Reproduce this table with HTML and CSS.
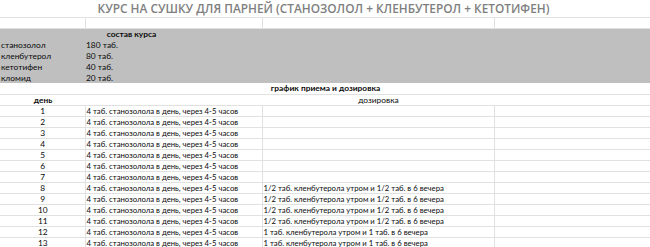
FILE: index.html
```html
<!DOCTYPE html>
<html lang="ru">
<head>
<meta charset="utf-8">
<link rel="stylesheet" href="styles.css">
</head>
<body>
<table class="sheet">
  <colgroup>
    <col class="c-a"><col class="c-b"><col class="c-c"><col class="c-d">
  </colgroup>
  <tr class="r-title"><td colspan="4" class="title">КУРС НА СУШКУ ДЛЯ ПАРНЕЙ (СТАНОЗОЛОЛ + КЛЕНБУТЕРОЛ + КЕТОТИФЕН)</td></tr>
  <tr class="r-empty"><td></td><td></td><td></td><td></td></tr>
  <tr class="r-gray"><td colspan="2" class="bold center">состав курса</td><td></td><td></td></tr>
  <tr class="r-gray"><td>станозолол</td><td>180 таб.</td><td></td><td></td></tr>
  <tr class="r-gray"><td>кленбутерол</td><td>80 таб.</td><td></td><td></td></tr>
  <tr class="r-gray"><td>кетотифен</td><td>40 таб.</td><td></td><td></td></tr>
  <tr class="r-gray"><td>кломид</td><td>20 таб.</td><td></td><td></td></tr>
  <tr class="r-section"><td colspan="4" class="bold center">график приема и дозировка</td></tr>
  <tr class="r-head"><td class="bold center">день</td><td class="nb"></td><td class="dose-head nb">дозировка</td><td></td></tr>
  <tr class="r-data"><td class="center">1</td><td>4 таб. станозолола в день, через 4-5 часов</td><td></td><td></td></tr>
  <tr class="r-data"><td class="center">2</td><td>4 таб. станозолола в день, через 4-5 часов</td><td></td><td></td></tr>
  <tr class="r-data"><td class="center">3</td><td>4 таб. станозолола в день, через 4-5 часов</td><td></td><td></td></tr>
  <tr class="r-data"><td class="center">4</td><td>4 таб. станозолола в день, через 4-5 часов</td><td></td><td></td></tr>
  <tr class="r-data"><td class="center">5</td><td>4 таб. станозолола в день, через 4-5 часов</td><td></td><td></td></tr>
  <tr class="r-data"><td class="center">6</td><td>4 таб. станозолола в день, через 4-5 часов</td><td></td><td></td></tr>
  <tr class="r-data"><td class="center">7</td><td>4 таб. станозолола в день, через 4-5 часов</td><td></td><td></td></tr>
  <tr class="r-data"><td class="center">8</td><td>4 таб. станозолола в день, через 4-5 часов</td><td>1/2 таб. кленбутерола утром и 1/2 таб. в 6 вечера</td><td></td></tr>
  <tr class="r-data"><td class="center">9</td><td>4 таб. станозолола в день, через 4-5 часов</td><td>1/2 таб. кленбутерола утром и 1/2 таб. в 6 вечера</td><td></td></tr>
  <tr class="r-data"><td class="center">10</td><td>4 таб. станозолола в день, через 4-5 часов</td><td>1/2 таб. кленбутерола утром и 1/2 таб. в 6 вечера</td><td></td></tr>
  <tr class="r-data"><td class="center">11</td><td>4 таб. станозолола в день, через 4-5 часов</td><td>1/2 таб. кленбутерола утром и 1/2 таб. в 6 вечера</td><td></td></tr>
  <tr class="r-data"><td class="center">12</td><td>4 таб. станозолола в день, через 4-5 часов</td><td>1 таб. кленбутерола утром и 1 таб. в 6 вечера</td><td></td></tr>
  <tr class="r-data"><td class="center">13</td><td>4 таб. станозолола в день, через 4-5 часов</td><td>1 таб. кленбутерола утром и 1 таб. в 6 вечера</td><td></td></tr>
</table>
</body>
</html>
```
FILE: styles.css
```css
html, body {
  margin: 0;
  padding: 0;
  background: #ffffff;
  overflow: hidden;
}
.sheet {
  width: 650px;
  border-collapse: collapse;
  table-layout: fixed;
  font-family: Lato, "Noto Sans", sans-serif;
  font-size: 8.4px;
  color: #0a0a0a;
}
.c-a { width: 85px; }
.c-b { width: 177px; }
.c-c { width: 232px; }
.c-d { width: 156px; }
.sheet td {
  padding: 0 0 0 1px;
  white-space: nowrap;
  overflow: hidden;
  border-left: 1px solid #e1e1e1;
  border-bottom: 1px solid #e1e1e1;
  line-height: 10px;
  vertical-align: middle;
}
.sheet td:first-child { border-left: none; }
.r-title td {
  height: 17px;
  text-align: center;
  font-family: "Open Sans", sans-serif;
  font-weight: 600;
  font-size: 11.85px;
  color: #7f7f7f;
  line-height: 17px;
  padding: 0 3px 0 0;
}
.r-empty td { height: 10px; }
.r-gray td {
  height: 10.8px;
  background: #bfbfbf;
  border-left: none;
  border-bottom: none;
}
.r-section td { height: 11px; border-left: none; }
.r-head td { height: 9.8px; }
.r-head td.nb { border-left: none; }
.r-head td:last-child { border-left: none; }
.r-data td { height: 9.8px; font-size: 7.75px; }
.r-data td.center { font-size: 8.4px; }
.bold { font-weight: 700; }
.center { text-align: center; }
.dose-head { text-align: center; padding-right: 34px; }
```
